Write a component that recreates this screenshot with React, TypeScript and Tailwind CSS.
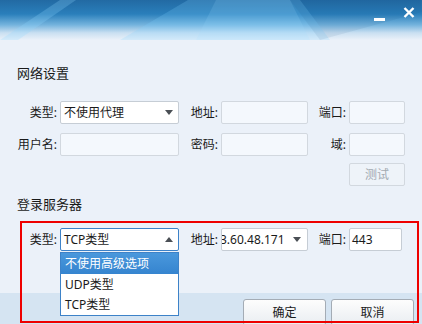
import React from 'react';

const font = { fontFamily: '"Noto Sans", "Noto Sans CJK SC", sans-serif' };

const Arrow = ({ up = false }: { up?: boolean }) => (
  <svg width="8" height="5" viewBox="0 0 8 5" className="shrink-0">
    <path d={up ? 'M0 5 L4 0 L8 5 Z' : 'M0 0 L8 0 L4 5 Z'} fill="#4a4f55" />
  </svg>
);

const Label = ({ w, children }: { w: string; children: React.ReactNode }) => (
  <div className={`${w} text-right text-[12px] text-[#1a1a1a] pr-[3px] leading-[23px]`}>{children}</div>
);

const Empty = ({ w }: { w: string }) => (
  <div className={`${w} h-full bg-[#f4f8fd] border border-[#d2d8df] rounded-[2px]`} />
);

const App = () => {
  return (
    <div className="relative w-[422px] h-[324px] overflow-hidden bg-[#ebf1f9] flex flex-col" style={font}>
      {/* title bar */}
      <div className="relative h-[40px] shrink-0 bg-[linear-gradient(to_bottom,#226aa3_0%,#2a7fbb_35%,#74b3dd_62%,#c9dff1_82%,#ebf1f9_100%)]">
        <svg className="absolute inset-0" width="422" height="40" viewBox="0 0 422 40">
          <polygon points="60,0 76,0 18,40 0,40" fill="#8fd6ff" fillOpacity="0.25" />
          <polygon points="188,0 300,0 330,40 120,40" fill="#7fd0ff" fillOpacity="0.22" />
          <polygon points="216,0 290,0 310,40 196,40" fill="#9fe0ff" fillOpacity="0.15" />
          <polygon points="290,0 420,0 422,12 320,40" fill="#0b3f70" fillOpacity="0.08" />
        </svg>
        <div className="absolute right-[7px] top-[4px] flex items-center gap-[18px]">
          <div className="w-[11px] h-[3px] bg-white mt-[14px]" />
          <svg width="12" height="11" viewBox="0 0 12 11">
            <path d="M1.5 1 L10.5 10 M10.5 1 L1.5 10" stroke="white" strokeWidth="2.4" />
          </svg>
        </div>
      </div>

      {/* network settings */}
      <div className="pl-[17px] mt-[24px] text-[13px] leading-[18px] text-[#1a1a1a]">网络设置</div>

      <div className="flex h-[23px] mt-[19px] pl-[17px]">
        <Label w="w-[43px]">类型:</Label>
        <div className="w-[119px] h-full bg-white border border-[#c6cdd5] rounded-[2px] flex items-center justify-between pl-[3px] pr-[5px]">
          <span className="text-[12px] text-[#1a1a1a]">不使用代理</span>
          <Arrow />
        </div>
        <Label w="w-[42px]">地址:</Label>
        <Empty w="w-[87px]" />
        <Label w="w-[41px]">端口:</Label>
        <Empty w="w-[56px]" />
      </div>

      <div className="flex h-[23px] mt-[9px] pl-[17px]">
        <Label w="w-[43px]">用户名:</Label>
        <Empty w="w-[119px]" />
        <Label w="w-[42px]">密码:</Label>
        <Empty w="w-[87px]" />
        <Label w="w-[41px]">域:</Label>
        <Empty w="w-[56px]" />
      </div>

      <div className="flex justify-start pl-[349px] mt-[7px]">
        <div className="w-[56px] h-[23px] bg-[#eef3f9] border border-[#d2d8df] rounded-[2px] flex items-center justify-center text-[12px] text-[#a3aab2]">
          测试
        </div>
      </div>

      {/* login server */}
      <div className="pl-[17px] mt-[9px] text-[13px] leading-[18px] text-[#1a1a1a]">登录服务器</div>

      <div className="flex h-[23px] mt-[15px] pl-[17px]">
        <Label w="w-[43px]">类型:</Label>
        <div className="w-[119px] h-full bg-white border border-[#3d82c8] rounded-[2px] flex items-center justify-between pl-[3px] pr-[5px]">
          <span className="text-[12px] text-[#1a1a1a]">TCP类型</span>
          <Arrow up />
        </div>
        <Label w="w-[42px]">地址:</Label>
        <div className="w-[87px] h-full bg-white border border-[#c6cdd5] rounded-[2px] flex items-center justify-between pr-[6px] overflow-hidden">
          <span className="text-[12px] text-[#1a1a1a] ml-[-2px] whitespace-nowrap">3.60.48.171</span>
          <Arrow />
        </div>
        <Label w="w-[41px]">端口:</Label>
        <div className="w-[53px] h-full bg-white border border-[#c6cdd5] rounded-[2px] flex items-center pl-[2px]">
          <span className="text-[12px] text-[#1a1a1a]">443</span>
        </div>
      </div>

      {/* footer */}
      <div className="mt-auto h-[31px] shrink-0 bg-[#d5e4f2] flex justify-end gap-[5px] pr-[8px] pt-[6px]">
        <div className="w-[83px] h-[27px] bg-[linear-gradient(to_bottom,#fdfdfd,#e9edf1)] border border-[#a4acb5] rounded-[3px] flex items-center justify-center text-[12px] text-[#1a1a1a]">
          确定
        </div>
        <div className="w-[83px] h-[27px] bg-[linear-gradient(to_bottom,#fdfdfd,#e9edf1)] border border-[#a4acb5] rounded-[3px] flex items-center justify-center text-[12px] text-[#1a1a1a]">
          取消
        </div>
      </div>

      {/* dropdown list */}
      <div className="absolute left-[60px] top-[252px] w-[119px] h-[64px] bg-white border border-[#3d82c8] flex flex-col text-[12px]">
        <div className="h-[21px] flex items-center pl-[4px] text-white bg-[linear-gradient(to_bottom,#4a98dc,#3584cf)]">不使用高级选项</div>
        <div className="h-[21px] flex items-center pl-[4px] text-[#1a1a1a]">UDP类型</div>
        <div className="h-[20px] flex items-center pl-[4px] text-[#1a1a1a]">TCP类型</div>
      </div>

      {/* red highlight */}
      <div className="absolute left-[20px] top-[221px] w-[399px] h-[102px] border-2 border-[#ee0000] pointer-events-none" />
    </div>
  );
};

export default App;
